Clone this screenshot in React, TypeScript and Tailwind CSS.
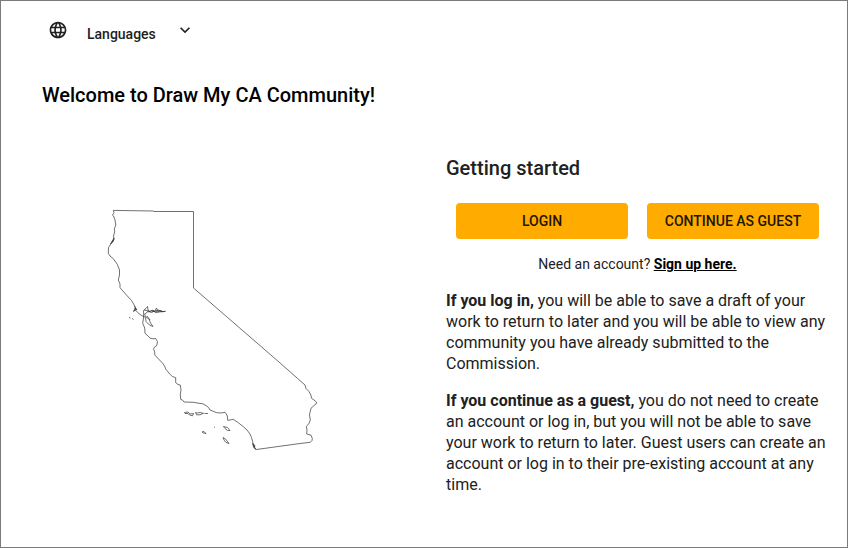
import { useState } from "react";
import { MdKeyboardArrowDown, MdLanguage } from "react-icons/md";

const languages = ["Languages", "English", "Español", "中文", "Tiếng Việt", "Tagalog"];

function CaliforniaMap() {
  return (
    <svg
      viewBox="104 206 216 248"
      className="w-[216px] max-w-full"
      fill="none"
      stroke="#333"
      strokeWidth="0.7"
      strokeLinejoin="round"
      role="img"
      aria-label="Outline of California"
    >
      {/* mainland */}
      <path d="M112.5 215.3L114 212.5L113.3 210.4L153 211L154 211.5H193.5V288L277 360.3L305 385L306 388.5L309 391.5L311 395.3L311.5 398.3L314 400L316.7 402.3L316 404L314 405.5L311 408.3L310 412.3L309.5 415L310.3 420L309 423.3L306.3 426.7L307 430L306.7 434L311 435.2L312.3 438.3L312 440.5L310.3 442.3L300 443.5L255.7 449.6L253.3 446L252.7 441.7L251.5 437.5L250 434L247 430L243.3 426.7L238.3 422.7L235 420.5L233.3 419.3L230 420L227.7 420.3L227.3 416L226.3 414L225 412.3L221 413L216.7 412.7L210 410L208.5 407.5L206.7 406L202.7 403.7L199 403.3L193.3 402.3L184 402L182.5 400L180.7 399.3L180.3 394L181 390L180.3 385L178 384.5L175.7 382.7V377.7L172.5 376.5L170.7 375L166 369.5L164.5 366L162.7 363.3L155 355.3L154.5 351L153.5 349.3L154.3 347.3L156.7 345.7L157.5 341.7L155.7 338.5L153 338.8L150 338L147 335L145 333.3L144.7 328L142.7 323.3L143.7 316.7L139.3 314L136 310.7L134.7 306L131.7 300.7L125.5 294L120 287.7L120 284L118.3 280L119.5 275V270L117.3 264.3L113.3 258.7L110 256L108.3 253.3L108.5 247.7L111 243.5L114 239.3L113.5 236L114.7 231.7L114.3 229L115.8 225L115 220L113.5 216Z" />
      {/* north coast lagoons, Point Reyes and San Diego bay */}
      <path d="M110.5 244L114 238L113 242ZM111.5 242L114 240M134.5 306L136.5 309.5L133.5 311.5L135 308L137 310M134 311L136 308M252.5 443L254.5 447L255 445.5L253 444L255.5 449L252.8 446.5" />
      {/* San Francisco bay and the delta */}
      <path d="M143.7 316.7L143.5 310.5L146 308.5L147.5 306.5L148 310L150 311.5L153 310L154.5 311.5L156.5 308L158 311.5L160 310.5L162 311.8L165.5 311.3L159 312L156 312.8L154 311L151 312.5L148 311L146.5 313L144.5 314L146 317L149 319L150.5 323L153 326.5L149.5 325L146 321.5L145.5 317.5L143 316M144 310L148.5 311M152 312L158 310L162 311M148 312L152 310.5L155 312L158 311L163 311.5M147 316L150 320M129 317.5L130.5 318M132 318.5L133.5 319.5" />
      {/* Channel Islands */}
      <path d="M184.5 412.5L188 412L190 414L193.5 413.5L192.5 415.8L189.5 415L188 413.5L185 413.5ZM195.5 412.5L197.5 413L200 412.5L203.5 413.3L200 414.8L196.5 414.8ZM204.5 413.5H208M202 432L204 431.5L206 433.5L203.5 433ZM214 427L215 427.5M223.5 426.5L227.5 427.5L230 430.5L227.5 430.5L225 428.5ZM223 437.5L225.5 439L229 443.5L226 442.5L224 440Z" />
    </svg>
  );
}

export default function App() {
  const [language, setLanguage] = useState("Languages");

  return (
    <div className="min-h-screen border border-[#7b7b7b] bg-white pb-12 font-['Roboto',sans-serif] text-[#212121]">
      <header className="flex items-start px-[47px] pt-[19px]">
        <label htmlFor="language" aria-label="Language">
          <MdLanguage className="size-5" />
        </label>
        <div className="grid w-[127px] items-start pl-[19px]">
          <select
            id="language"
            value={language}
            onChange={(e) => setLanguage(e.target.value)}
            className="col-start-1 row-start-1 appearance-none bg-transparent pt-1 text-sm font-medium"
          >
            {languages.map((name) => (
              <option key={name}>{name}</option>
            ))}
          </select>
          <MdKeyboardArrowDown className="pointer-events-none col-start-1 row-start-1 size-5 justify-self-end" />
        </div>
      </header>

      <h1 className="px-[41px] pt-[37px] text-xl leading-7 font-medium text-black">
        Welcome to Draw My CA Community!
      </h1>

      <main className="grid grid-cols-2 pt-[45px]">
        <div className="flex items-start justify-center pt-13 pr-0.5">
          <CaliforniaMap />
        </div>

        <section className="pr-[18px] pl-[22px]">
          <h2 className="text-xl leading-7 font-medium">Getting started</h2>
          <div className="grid grid-cols-2 gap-[19px] px-2.5 pt-[21px]">
            <button type="button" className="h-9 rounded bg-[#ffab00] text-sm font-medium text-[#211600]">
              LOGIN
            </button>
            <button type="button" className="h-9 rounded bg-[#ffab00] text-sm font-medium text-[#211600]">
              CONTINUE AS GUEST
            </button>
          </div>
          <p className="pt-[15px] text-center text-sm">
            Need an account?{" "}
            <a href="#signup" className="font-bold text-black underline">
              Sign up here.
            </a>
          </p>
          <p className="pt-4 leading-[21px]">
            <strong>If you log in,</strong> you will be able to save a draft of your work to return to later and you
            will be able to view any community you have already submitted to the Commission.
          </p>
          <p className="pt-4 leading-[21px]">
            <strong>If you continue as a guest,</strong> you do not need to create an account or log in, but you will
            not be able to save your work to return to later. Guest users can create an account or log in to their
            pre-existing account at any time.
          </p>
        </section>
      </main>
    </div>
  );
}
